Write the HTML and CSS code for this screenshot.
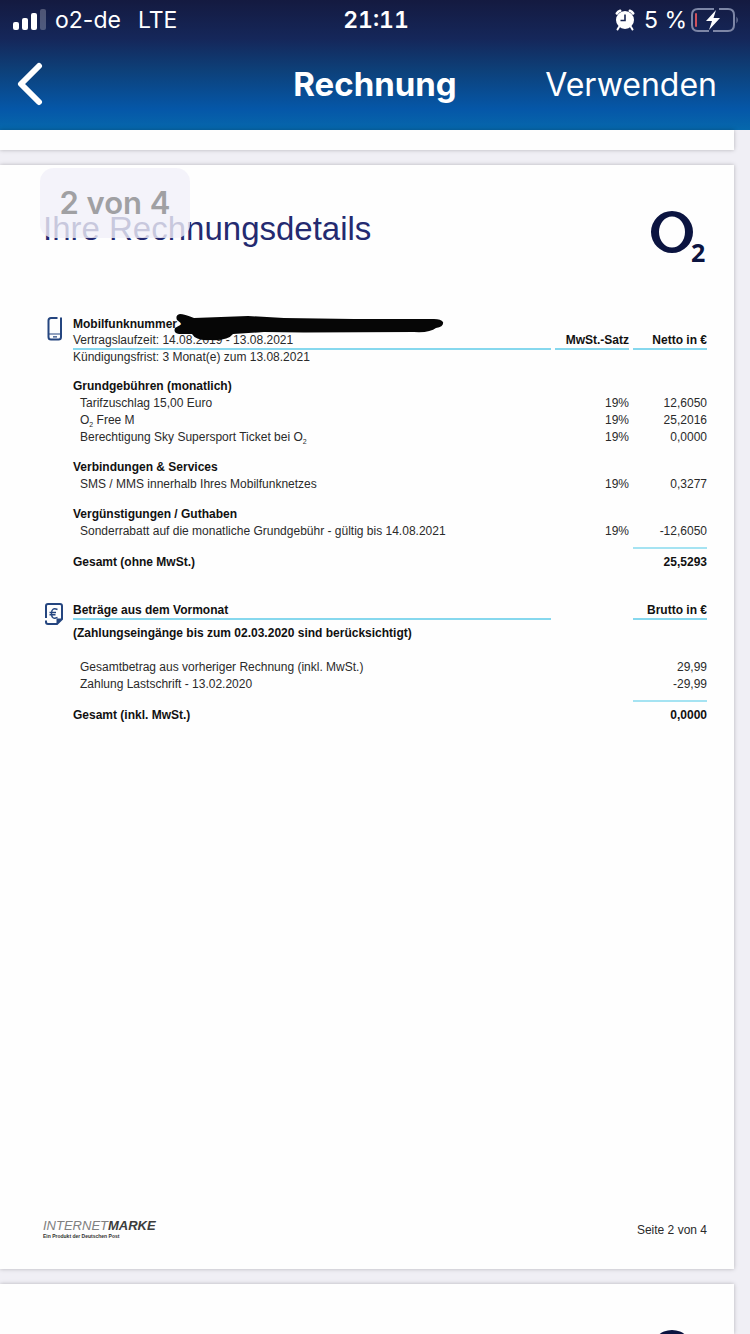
FILE: index.html
```html
<!DOCTYPE html>
<html lang="de">
<head>
    <meta charset="UTF-8">
    <meta name="viewport" content="width=device-width, initial-scale=1.0">
    <title>Rechnung</title>
    <link rel="stylesheet" href="styles.css">
</head>
<body>
    <header class="app-header">
        <div class="status-bar">
            <div class="status-left">
                <svg class="signal" width="34" height="22" viewBox="0 0 34 22" fill="#fff" aria-hidden="true">
                    <rect x="0" y="13" width="6" height="8" rx="2"/>
                    <rect x="9" y="9" width="6" height="12" rx="2"/>
                    <rect x="18" y="4" width="6" height="17" rx="2"/>
                    <rect x="27" y="0" width="6" height="21" rx="2" opacity=".25"/>
                </svg>
                <span>o2-de</span>
                <span class="network">LTE</span>
            </div>
            <div class="time">21:11</div>
            <div class="status-right">
                <svg width="20" height="22" viewBox="0 0 20 22" aria-hidden="true">
                    <circle cx="10" cy="11" r="9" fill="#fff"/>
                    <path d="M1.800 4.500 Q3 2.500 5.200 1.800 M18.200 4.500 Q17 2.500 14.800 1.800" stroke="#fff" stroke-width="2.600" stroke-linecap="round" fill="none"/>
                    <path d="M4 18 L2.500 20.500 M16 18 L17.500 20.500" stroke="#fff" stroke-width="2" stroke-linecap="round"/>
                    <path d="M10 5.500 V11.500 H5.500" stroke="#16234f" stroke-width="1.600" fill="none"/>
                </svg>
                <span class="percent">5 %</span>
                <svg width="48" height="24" viewBox="0 0 48 24" aria-hidden="true">
                    <path d="M23 1 H7 Q1 1 1 7 V17 Q1 23 7 23 H18 M28 1 H37 Q43 1 43 7 V17 Q43 23 37 23 H22" fill="none" stroke="#7d86a6" stroke-width="2"/>
                    <path d="M45.500 8.500 Q48 12 45.500 15.500 Z" fill="#7d86a6"/>
                    <rect x="4" y="5" width="2" height="14" rx="1" fill="#d0525c"/>
                    <path d="M25 2 L15 13 H21 L18 22 L29 10 H22.500 Z" fill="#fff"/>
                </svg>
            </div>
        </div>
        <nav class="nav-bar">
            <button class="back" type="button" aria-label="Zurück">
                <svg width="28" height="44" viewBox="0 0 28 44" aria-hidden="true">
                    <path d="M22 4 L4 22 L22 40" fill="none" stroke="#fff" stroke-width="6" stroke-linecap="round" stroke-linejoin="round"/>
                </svg>
            </button>
            <h1>Rechnung</h1>
            <button class="use" type="button">Verwenden</button>
        </nav>
    </header>

    <main class="viewer">
        <div class="page page-prev"></div>

        <article class="page page-current">
            <div class="page-counter">2 von 4</div>

            <div class="page-head">
                <h2>Ihre Rechnungsdetails</h2>
                <svg class="logo" width="58" height="58" viewBox="0 0 58 58" role="img" aria-label="O2">
                    <path d="M2 22 A21 21 0 0 1 44 22 A21 21 0 0 1 2 22 Z M10 22 A13 15.500 0 0 0 36 22 A13 15.500 0 0 0 10 22 Z" fill="#0b1440" fill-rule="evenodd"/>
                    <text x="42" y="52">2</text>
                </svg>
            </div>

            <section class="block">
                <svg class="block-icon" width="26" height="26" viewBox="-3 0 26 26" fill="none" stroke="#24457f" aria-hidden="true">
                    <path d="M11.500 2 H5 Q2.500 2 2.500 4.500 V21 Q2.500 23.500 5 23.500 H12.500 Q15 23.500 15 21 V1.500" stroke-width="2"/>
                    <path d="M3 18 H15 M7 20.800 H11" stroke-width="1.200"/>
                </svg>
                <table>
                    <thead>
                        <tr>
                            <th class="name">
                                <div class="number">Mobilfunknummer 0
                                    <svg class="marker" width="272" height="28" viewBox="0 0 272 28" aria-hidden="true">
                                        <path d="M6 0 Q1 1 3 6 L8 10 L1 14 Q-1 19 5 20 L18 20 Q22 27 36 26 Q54 27 59 20 L90 18 L130 18.500 L240 18 Q256 19 262 14 Q270 13 269 8 Q267 5 260 5 L180 5 L110 4 L74 2 L20 4 Q10 0 6 0 Z" fill="#060606"/>
                                    </svg>
                                </div>
                                <div class="term">Vertragslaufzeit: 14.08.2019 - 13.08.2021</div>
                            </th>
                            <th>MwSt.-Satz</th>
                            <th>Netto in €</th>
                        </tr>
                    </thead>
                    <tbody>
                        <tr class="notice"><td colspan="3">Kündigungsfrist: 3 Monat(e) zum 13.08.2021</td></tr>
                        <tr class="group"><td colspan="3">Grundgebühren (monatlich)</td></tr>
                        <tr class="item"><td>Tarifzuschlag 15,00 Euro</td><td>19%</td><td>12,6050</td></tr>
                        <tr class="item"><td>O<sub>2</sub> Free M</td><td>19%</td><td>25,2016</td></tr>
                        <tr class="item"><td>Berechtigung Sky Supersport Ticket bei O<sub>2</sub></td><td>19%</td><td>0,0000</td></tr>
                        <tr class="group"><td colspan="3">Verbindungen &amp; Services</td></tr>
                        <tr class="item"><td>SMS / MMS innerhalb Ihres Mobilfunknetzes</td><td>19%</td><td>0,3277</td></tr>
                        <tr class="group"><td colspan="3">Vergünstigungen / Guthaben</td></tr>
                        <tr class="item"><td>Sonderrabatt auf die monatliche Grundgebühr - gültig bis 14.08.2021</td><td>19%</td><td>-12,6050</td></tr>
                    </tbody>
                    <tfoot>
                        <tr class="total"><td>Gesamt (ohne MwSt.)</td><td></td><td class="sum">25,5293</td></tr>
                    </tfoot>
                </table>
            </section>

            <section class="block">
                <svg class="block-icon" width="26" height="24" viewBox="-1 0 26 24" fill="none" stroke="#24457f" aria-hidden="true">
                    <path d="M2 16 V4 Q2 2 4 2 H16 Q18 2 18 4 V17 L13 22 H4 Q2 22 2 20 V18.500" stroke-width="2"/>
                    <path d="M18 17 H13 V22 Z" fill="#24457f"/>
                    <path d="M13.500 7.500 Q7.500 5 7.500 11.500 Q7.500 18 13.500 15.500 M5.500 10.500 H12 M5.500 12.800 H11.500" stroke-width="1.400"/>
                </svg>
                <table>
                    <thead>
                        <tr>
                            <th class="name">Beträge aus dem Vormonat</th>
                            <th class="blank"></th>
                            <th>Brutto in €</th>
                        </tr>
                    </thead>
                    <tbody>
                        <tr class="note"><td colspan="3">(Zahlungseingänge bis zum 02.03.2020 sind berücksichtigt)</td></tr>
                        <tr class="item"><td>Gesamtbetrag aus vorheriger Rechnung (inkl. MwSt.)</td><td></td><td>29,99</td></tr>
                        <tr class="item"><td>Zahlung Lastschrift - 13.02.2020</td><td></td><td>-29,99</td></tr>
                    </tbody>
                    <tfoot>
                        <tr class="total"><td>Gesamt (inkl. MwSt.)</td><td></td><td class="sum">0,0000</td></tr>
                    </tfoot>
                </table>
            </section>

            <footer class="page-foot">
                <div class="stamp">
                    <div class="stamp-name">INTERNET<b>MARKE</b></div>
                    <div class="stamp-sub">Ein Produkt der Deutschen Post</div>
                </div>
                <div>Seite 2 von 4</div>
            </footer>
        </article>

        <div class="page page-next">
            <div class="page-head">
                <svg class="logo" width="58" height="58" viewBox="0 0 58 58" aria-hidden="true">
                    <path d="M2 22 A21 21 0 0 1 44 22 A21 21 0 0 1 2 22 Z M10 22 A13 15.500 0 0 0 36 22 A13 15.500 0 0 0 10 22 Z" fill="#0b1440" fill-rule="evenodd"/>
                </svg>
            </div>
        </div>
    </main>
</body>
</html>
```
FILE: styles.css
```css
* {
    box-sizing: border-box;
}
body {
    display: flex;
    flex-direction: column;
    height: 100vh;
    margin: 0;
    overflow: hidden;
    background: #f0eff5;
    font-family: "Liberation Sans", Arial, sans-serif;
    font-size: 12px;
    line-height: 17px;
    color: #2a2a2a;
}
h1, h2 {
    margin: 0;
}
button {
    padding: 0;
    border: 0;
    background: none;
    color: inherit;
    font: inherit;
}

/* status bar + navigation */
.app-header {
    flex: none;
    height: 130px;
    background: linear-gradient(#141a40 0, #15275a 30%, #0d4079 54%, #0557a8 84%, #0668ac 100%);
    color: #fff;
    font-family: Inter, Roboto, sans-serif;
}
.status-bar, .nav-bar {
    display: grid;
    grid-template-columns: 1fr auto 1fr;
    align-items: center;
}
.status-bar {
    height: 40px;
    padding: 0 11px 0 13px;
    font-size: 23px;
    line-height: 40px;
}
.status-left, .status-right {
    display: flex;
    align-items: center;
}
.signal {
    margin-right: 8px;
}
.network {
    margin-left: 17px;
}
.time {
    font-variant-numeric: tabular-nums;
    font-weight: 600;
}
.status-right {
    justify-content: flex-end;
}
.percent {
    margin: 0 4px 0 9px;
}
.nav-bar {
    height: 88px;
    padding: 0 33px;
    font-size: 32px;
}
.nav-bar h1 {
    font-size: 33px;
    font-weight: 700;
}
.back {
    justify-self: start;
    margin-left: -16px;
}
.back svg {
    display: block;
}
.use {
    justify-self: end;
}

/* pdf pages */
.viewer {
    display: flex;
    flex: 1;
    flex-direction: column;
    gap: 15px;
    min-height: 0;
    padding-right: 16px;
}
.page {
    position: relative;
    flex: none;
    padding: 45px 27px 0 43px;
    background: #fefefe;
    box-shadow: 0 0 4px rgba(0, 0, 0, .25);
}
.page-prev {
    height: 20px;
    padding: 0;
}
.page-current {
    display: flex;
    flex-direction: column;
    min-height: 1104px;
}
.page-next {
    flex: 1;
    overflow: hidden;
}
.page-counter {
    position: absolute;
    top: 3px;
    left: 40px;
    width: 150px;
    height: 70px;
    border-radius: 14px;
    background: rgba(241, 240, 249, .8);
    color: #a0a0a3;
    font-family: Inter, Roboto, sans-serif;
    font-size: 31px;
    font-weight: 600;
    line-height: 70px;
    text-align: center;
}
.page-head {
    display: flex;
    justify-content: space-between;
    height: 106px;
}
.page-head h2 {
    color: #242a70;
    font-size: 33px;
    font-weight: 400;
    line-height: 38px;
}
.logo {
    flex: none;
    margin-left: auto;
}
.logo text {
    fill: #0b1440;
    font-family: "Open Sans", sans-serif;
    font-size: 25px;
    font-weight: 700;
}
.block {
    display: flex;
    align-items: flex-start;
    margin-bottom: 31px;
}
.block-icon {
    flex: none;
}
table {
    flex: 1;
    margin-right: -4px;
    border-spacing: 4px 0;
    table-layout: fixed;
}
th, td {
    padding: 0;
    text-align: right;
    vertical-align: bottom;
}
th {
    width: 74px;
    border-bottom: 2px solid #86d8ee;
    color: #111;
    line-height: 16px;
}
th.name {
    width: auto;
}
th.blank {
    border-color: transparent;
}
th:first-child, td:first-child {
    text-align: left;
}
.number {
    position: relative;
}
.marker {
    position: absolute;
    top: -2px;
    left: 101px;
}
.term {
    color: #2a2a2a;
    font-weight: 400;
}
.notice td {
    line-height: 15px;
}
.group td {
    padding-top: 13px;
    color: #111;
    font-weight: 700;
}
.item td:first-child {
    padding-left: 7px;
}
.item:last-child td {
    padding-bottom: 7px;
}
.note td {
    padding: 5px 0 17px;
    color: #111;
    font-weight: 700;
}
.total td {
    padding-top: 5px;
    border-top: 2px solid transparent;
    color: #111;
    font-weight: 700;
}
.total .sum {
    border-color: #a5e3f2;
}
sub {
    font-size: 7px;
    line-height: 0;
}

/* page footer */
.page-foot {
    display: flex;
    justify-content: space-between;
    align-items: flex-end;
    margin: auto 0 30px;
}
.stamp-name {
    color: #808080;
    font-size: 13px;
    font-style: italic;
    line-height: 14px;
}
.stamp-name b {
    color: #3c3c3c;
}
.stamp-sub {
    color: #333;
    font-size: 5px;
    font-weight: 700;
    line-height: 6px;
}
```
